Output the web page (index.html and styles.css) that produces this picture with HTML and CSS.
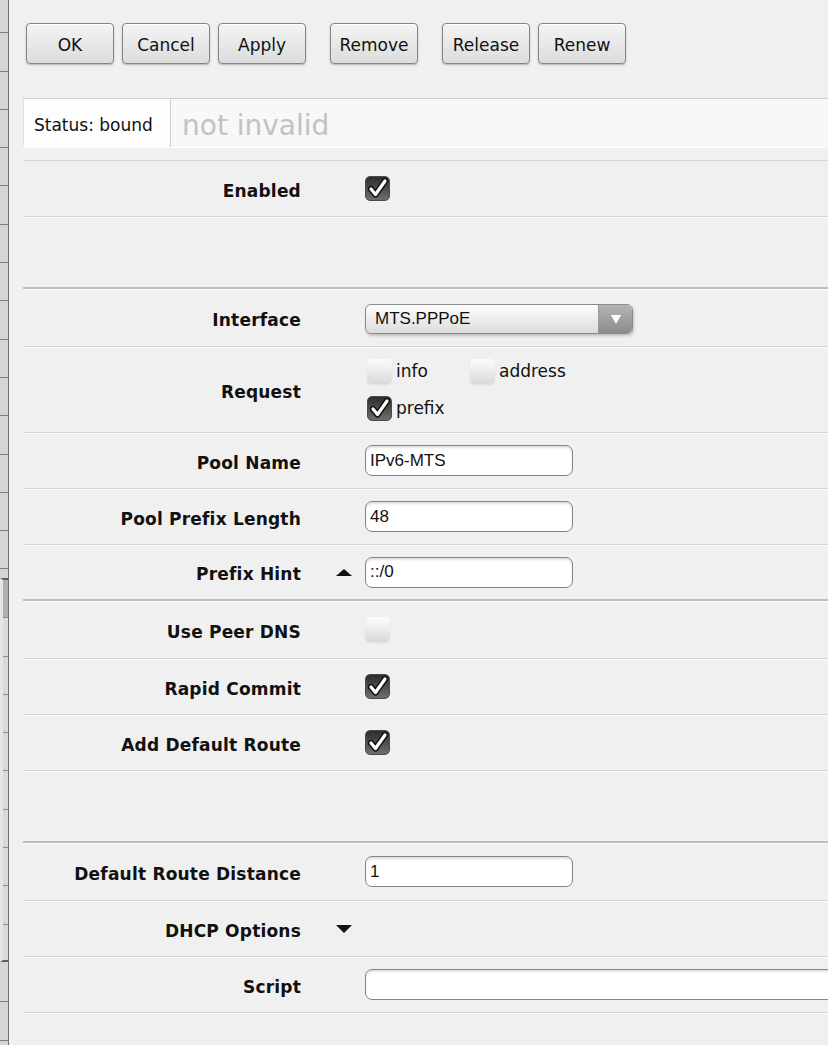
FILE: index.html
```html
<!DOCTYPE html>
<html lang="en">
<head>
    <meta charset="UTF-8">
    <meta name="viewport" content="width=device-width, initial-scale=1.0">
    <title>DHCP Client</title>
    <link rel="stylesheet" href="styles.css">
</head>
<body>

<div class="page">
    <aside class="sidebar">
        <div class="menu-top"></div>
        <div class="menu-sub"></div>
        <div class="menu-bottom"></div>
    </aside>

    <main class="main">
        <div class="toolbar">
            <div class="btn-group">
                <button class="btn" type="button">OK</button>
                <button class="btn" type="button">Cancel</button>
                <button class="btn" type="button">Apply</button>
            </div>
            <div class="btn-group">
                <button class="btn" type="button">Remove</button>
            </div>
            <div class="btn-group">
                <button class="btn" type="button">Release</button>
                <button class="btn" type="button">Renew</button>
            </div>
        </div>

        <div class="status-bar">
            <div class="status-box">Status: bound</div>
            <div class="status-text">not invalid</div>
        </div>

        <form class="form" id="dhcpForm">
            <div class="row">
                <label class="row-label">Enabled</label>
                <span class="row-mark"></span>
                <div class="row-field">
                    <span class="check on">
                        <svg viewBox="0 0 25 25" width="25" height="25"><polyline points="6,13 10.5,18.5 20,5" fill="none" stroke="#111" stroke-width="6.2" stroke-linecap="round" stroke-linejoin="round"/><polyline points="6,13 10.5,18.5 20,5" fill="none" stroke="#fff" stroke-width="3.2" stroke-linecap="round" stroke-linejoin="round"/></svg>
                    </span>
                </div>
            </div>

            <div class="row section spacer"></div>

            <div class="row lead">
                <label class="row-label">Interface</label>
                <span class="row-mark"></span>
                <div class="row-field">
                    <div class="select">
                        <span class="select-value">MTS.PPPoE</span>
                        <span class="select-btn">
                            <svg viewBox="0 0 10 9" width="10" height="9"><polygon points="0,0 10,0 5,9" fill="#fff"/></svg>
                        </span>
                    </div>
                </div>
            </div>

            <div class="row tall">
                <label class="row-label">Request</label>
                <span class="row-mark"></span>
                <div class="row-field">
                    <div class="options">
                        <span class="option"><span class="check off"></span>info</span>
                        <span class="option"><span class="check off"></span>address</span>
                        <span class="option">
                            <span class="check on">
                                <svg viewBox="0 0 25 25" width="25" height="25"><polyline points="6,13 10.5,18.5 20,5" fill="none" stroke="#111" stroke-width="6.2" stroke-linecap="round" stroke-linejoin="round"/><polyline points="6,13 10.5,18.5 20,5" fill="none" stroke="#fff" stroke-width="3.2" stroke-linecap="round" stroke-linejoin="round"/></svg>
                            </span>prefix
                        </span>
                    </div>
                </div>
            </div>

            <div class="row">
                <label class="row-label" for="poolName">Pool Name</label>
                <span class="row-mark"></span>
                <div class="row-field"><input class="text-input" id="poolName" type="text" value="IPv6-MTS"></div>
            </div>

            <div class="row">
                <label class="row-label" for="poolLen">Pool Prefix Length</label>
                <span class="row-mark"></span>
                <div class="row-field"><input class="text-input" id="poolLen" type="text" value="48"></div>
            </div>

            <div class="row section">
                <label class="row-label" for="prefixHint">Prefix Hint</label>
                <span class="row-mark">
                    <svg viewBox="0 0 16 7" width="16" height="7"><polygon points="0,7 16,7 8,0" fill="#111"/></svg>
                </span>
                <div class="row-field"><input class="text-input" id="prefixHint" type="text" value="::/0"></div>
            </div>

            <div class="row lead">
                <label class="row-label">Use Peer DNS</label>
                <span class="row-mark"></span>
                <div class="row-field"><span class="check off"></span></div>
            </div>

            <div class="row">
                <label class="row-label">Rapid Commit</label>
                <span class="row-mark"></span>
                <div class="row-field">
                    <span class="check on">
                        <svg viewBox="0 0 25 25" width="25" height="25"><polyline points="6,13 10.5,18.5 20,5" fill="none" stroke="#111" stroke-width="6.2" stroke-linecap="round" stroke-linejoin="round"/><polyline points="6,13 10.5,18.5 20,5" fill="none" stroke="#fff" stroke-width="3.2" stroke-linecap="round" stroke-linejoin="round"/></svg>
                    </span>
                </div>
            </div>

            <div class="row">
                <label class="row-label">Add Default Route</label>
                <span class="row-mark"></span>
                <div class="row-field">
                    <span class="check on">
                        <svg viewBox="0 0 25 25" width="25" height="25"><polyline points="6,13 10.5,18.5 20,5" fill="none" stroke="#111" stroke-width="6.2" stroke-linecap="round" stroke-linejoin="round"/><polyline points="6,13 10.5,18.5 20,5" fill="none" stroke="#fff" stroke-width="3.2" stroke-linecap="round" stroke-linejoin="round"/></svg>
                    </span>
                </div>
            </div>

            <div class="row section spacer"></div>

            <div class="row lead">
                <label class="row-label" for="routeDistance">Default Route Distance</label>
                <span class="row-mark"></span>
                <div class="row-field"><input class="text-input" id="routeDistance" type="text" value="1"></div>
            </div>

            <div class="row">
                <label class="row-label">DHCP Options</label>
                <span class="row-mark">
                    <svg viewBox="0 0 16 8" width="16" height="8"><polygon points="0,0 16,0 8,8" fill="#111"/></svg>
                </span>
                <div class="row-field"></div>
            </div>

            <div class="row">
                <label class="row-label" for="script">Script</label>
                <span class="row-mark"></span>
                <div class="row-field"><input class="text-input wide" id="script" type="text" value=""></div>
            </div>
        </form>
    </main>
</div>

</body>
</html>
```

FILE: styles.css
```css
body {
    margin: 0;
    background-color: #f0f0f0;
    color: #111;
    font-family: "DejaVu Sans", sans-serif;
    font-size: 17px;
    overflow: hidden;
}

.page {
    display: flex;
    min-height: 100vh;
}

/* menu strip on the left */
.sidebar {
    width: 8px;
    flex-shrink: 0;
    display: flex;
    flex-direction: column;
    border-right: 1px solid #6e6e6e;
}

.menu-top {
    height: 578px;
    background: repeating-linear-gradient(to bottom, #d6d6d6 0, #d6d6d6 37.3px, #7e7e7e 37.3px, #7e7e7e 38.3px);
    background-position: 0 -5px;
}

.menu-sub {
    height: 380px;
    border-top: 2px solid #5e5e5e;
    border-bottom: 2px solid #5e5e5e;
    border-left: 3px solid #e6e6e6;
    background:
        linear-gradient(#b0b0b0 0, #b0b0b0 37px, transparent 37px),
        repeating-linear-gradient(to bottom, #dadada 0, #dadada 37.3px, #8e8e8e 37.3px, #8e8e8e 38.3px);
}

.menu-bottom {
    flex: 1;
    background: repeating-linear-gradient(to bottom, #d6d6d6 0, #d6d6d6 37.3px, #7e7e7e 37.3px, #7e7e7e 38.3px);
    background-position: 0 2px;
}

.main {
    flex: 1;
    min-width: 0;
    padding-left: 14px;
    overflow: hidden;
}

/* buttons */
.toolbar {
    display: flex;
    gap: 24px;
    height: 98px;
    padding: 23px 0 0 3px;
    box-sizing: border-box;
}

.btn-group {
    display: flex;
    gap: 8px;
}

.btn {
    width: 88px;
    height: 41px;
    padding: 3px 0 0;
    font-family: "DejaVu Sans", sans-serif;
    font-size: 17px;
    color: #111;
    border: 1px solid #858585;
    border-radius: 4px;
    background: linear-gradient(#f4f4f4, #dcdcdc);
    box-shadow: 0 1px 2px rgba(0, 0, 0, 0.25), inset 0 1px 0 #fff;
    cursor: pointer;
}

/* status */
.status-bar {
    display: flex;
    align-items: center;
    height: 50px;
    box-sizing: border-box;
    margin-bottom: 12px;
    border-top: 1px solid #cdcdcd;
    border-bottom: 1px solid #fff;
    background-color: #f8f8f8;
}

.status-box {
    display: flex;
    align-items: center;
    width: 148px;
    height: 100%;
    box-sizing: border-box;
    padding: 3px 0 0 10px;
    background-color: #fdfdfd;
    border-left: 1px solid #e2e2e2;
    border-right: 1px solid #cfcfcf;
}

.status-text {
    padding: 4px 0 0 11px;
    font-size: 28px;
    color: #c2c2c2;
}

/* form rows */
.form {
    margin: 0;
    border-top: 1px solid #d6d6d6;
}

.row {
    display: grid;
    grid-template-columns: 278px 64px 1fr;
    align-items: center;
    height: 56px;
    box-sizing: border-box;
    border-bottom: 1px solid #d6d6d6;
    box-shadow: 0 1px 0 #fbfbfb;
}

.row.lead {
    height: 58px;
}

.row.tall {
    height: 86px;
}

.row.section {
    border-bottom: 2px solid #bdbdbd;
}

.row.spacer {
    height: 72px;
}

.row-label {
    padding-top: 4px;
    text-align: right;
    font-weight: bold;
    letter-spacing: 0.2px;
}

.row-mark {
    display: flex;
    align-items: center;
    padding-left: 35px;
}

.row-field {
    display: flex;
    align-items: center;
}

/* checkboxes */
.check {
    display: inline-block;
    flex-shrink: 0;
    width: 25px;
    height: 25px;
    border-radius: 5px;
    box-sizing: border-box;
}

.check svg {
    display: block;
}

.check.on {
    background: linear-gradient(#2c2c2c, #6e6e6e);
    border: 1px solid #4a4a4a;
}

.check.on svg {
    margin: -1px;
}

.check.off {
    background: linear-gradient(#fdfdfd, #d9d9d9);
    box-shadow: 0 1px 2px rgba(0, 0, 0, 0.08);
}

.options {
    display: grid;
    grid-template-columns: 103px 103px;
    row-gap: 12px;
    padding-left: 2px;
}

.option {
    display: flex;
    align-items: center;
    gap: 4px;
}

/* inputs */
.text-input {
    width: 208px;
    height: 31px;
    box-sizing: border-box;
    padding: 0 4px;
    font-family: "Liberation Sans", Arial, sans-serif;
    font-size: 17px;
    color: #111;
    background-color: #fff;
    border: 1px solid #858585;
    border-radius: 7px;
    box-shadow: inset 0 2px 2px rgba(0, 0, 0, 0.12);
    outline: none;
}

.text-input.wide {
    width: 620px;
}

.select {
    display: flex;
    width: 268px;
    height: 30px;
    margin-top: 3px;
    box-sizing: border-box;
    overflow: hidden;
    border: 1px solid #8a8a8a;
    border-radius: 6px;
    background: linear-gradient(#fdfdfd, #dcdcdc);
    box-shadow: 1px 2px 3px rgba(0, 0, 0, 0.2);
}

.select-value {
    flex: 1;
    align-self: center;
    padding-left: 9px;
    font-family: "Liberation Sans", Arial, sans-serif;
    font-size: 17px;
}

.select-btn {
    display: flex;
    align-items: center;
    justify-content: center;
    width: 33px;
    border-left: 1px solid #9a9a9a;
    background: linear-gradient(#b4b4b4, #8c8c8c);
}
```
